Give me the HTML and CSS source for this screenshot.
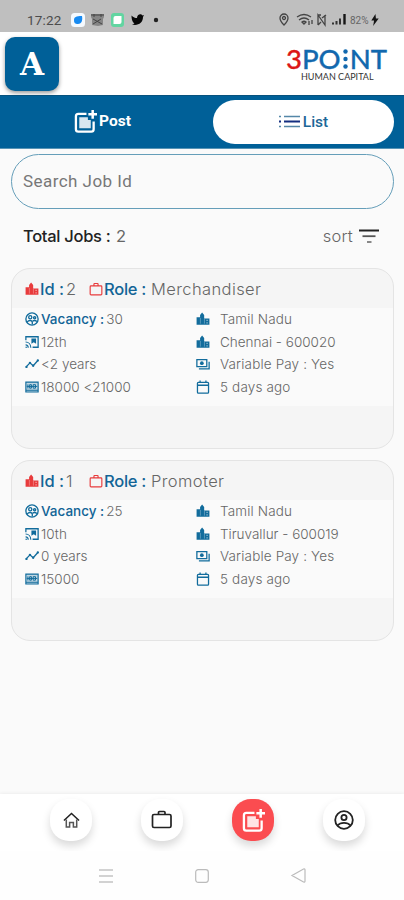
FILE: index.html
```
<!DOCTYPE html>
<html lang="en">
  <head>
    <meta charset="UTF-8" />
    <meta name="viewport" content="width=device-width, initial-scale=1.0" />
    <link rel="stylesheet" href="styles.css">
    <title>Jobs</title>
  </head>
  <body>
    <svg class="sprite">
      <symbol id="post" viewBox="0 0 24 24">
        <path d="M13 4H4.500A2.500 2.500 0 0 0 2 6.500V20a2.500 2.500 0 0 0 2.500 2.500H18a2.500 2.500 0 0 0 2.500-2.500V12" fill="none" stroke="currentColor" stroke-width="2.400" />
        <path d="M5.500 7.500h9v3h3V19h-12z" fill="currentColor" opacity=".85" />
        <path d="M19.500 0v9M15 4.500h9" stroke="currentColor" stroke-width="2.600" />
      </symbol>
      <symbol id="city" viewBox="0 0 24 24">
        <path d="M1 9h6V5l3.500-4L14 5v6h9v11H1z" fill="currentColor" />
        <path d="M7.500 10v10M14.500 12v8" stroke="#fff" stroke-width="1" opacity=".5" />
        <path d="M18 14.500h2M18 18.500h2" stroke="#fff" stroke-width="2" opacity=".6" />
      </symbol>
      <symbol id="bag" viewBox="0 0 24 24">
        <path d="M3.500 6.500h17a1.500 1.500 0 0 1 1.500 1.500v12.500a1.500 1.500 0 0 1-1.500 1.500h-17A1.500 1.500 0 0 1 2 20.500V8a1.500 1.500 0 0 1 1.500-1.500zM8.500 6V3.500a1 1 0 0 1 1-1h5a1 1 0 0 1 1 1V6" fill="none" stroke="currentColor" stroke-width="2" />
      </symbol>
      <symbol id="people" viewBox="0 0 24 24">
        <g fill="none" stroke="currentColor" stroke-width="2.300">
          <circle cx="12" cy="12" r="10.500" />
          <circle cx="9" cy="9" r="2.700" />
          <circle cx="16.500" cy="10" r="1.900" />
          <path d="M3.500 17.500c3-4 8-4 9 0v4M13 15.500c3-1.500 5.500-1 7.500 1" />
        </g>
      </symbol>
      <symbol id="school" viewBox="0 0 24 24">
        <path d="M1.500 9V3h21v18H13" fill="none" stroke="currentColor" stroke-width="2.200" />
        <path d="M11 6h8v9l-4-2.500-4 2.500z" fill="currentColor" />
        <path d="M1 12c5 0 9 4 9 10M1 17c3 0 4.500 2 4.500 5" fill="none" stroke="currentColor" stroke-width="2" />
        <circle cx="2" cy="21" r="1.300" fill="currentColor" />
      </symbol>
      <symbol id="trend" viewBox="0 0 24 24">
        <path d="M2 17l6.500-7 5.500 5 8-9" fill="none" stroke="currentColor" stroke-width="2.200" />
        <g fill="currentColor"><circle cx="2.500" cy="17" r="2" /><circle cx="8.500" cy="10" r="2" /><circle cx="14" cy="15" r="2" /><circle cx="22" cy="6" r="2" /></g>
      </symbol>
      <symbol id="money" viewBox="0 0 24 24">
        <path d="M1.500 3.500h21v17h-21zM1 17.500h22" fill="currentColor" fill-opacity=".25" stroke="currentColor" stroke-width="2" />
        <path d="M5 7.500v7M8 8h3v6H8zM14 8h4v6h-4zM3 11h18" fill="none" stroke="currentColor" stroke-width="1.700" />
      </symbol>
      <symbol id="pay" viewBox="0 0 24 24">
        <path d="M1.500 4.500h17v12h-17zM5 20.500h17.500V8" fill="none" stroke="currentColor" stroke-width="2.200" />
        <circle cx="10" cy="10.500" r="3.200" fill="currentColor" />
      </symbol>
      <symbol id="calendar" viewBox="0 0 24 24">
        <path d="M4 4h16a1.500 1.500 0 0 1 1.500 1.500v15.500a1.500 1.500 0 0 1-1.500 1.500H4a1.500 1.500 0 0 1-1.500-1.500V5.500A1.500 1.500 0 0 1 4 4zM2.500 9h19M7 1v4M17 1v4" fill="none" stroke="currentColor" stroke-width="2.200" />
      </symbol>
    </svg>

    <div class="status">
      <span class="time">17:22</span>
      <svg width="100" height="14" viewBox="0 0 100 14">
        <rect x="0" y="0" width="14" height="14" rx="3.500" fill="#f5faff" />
        <path d="M3 7c0-3 2-4 8-4 1 5-1 8-4 8s-4-1-4-4z" fill="#168af1" />
        <path d="M20 1h13v3l-1 2v6l-5 1-6-1V6l-1-2z" fill="#858585" />
        <path d="M20 2h13M22 6l9 5M22 11l8-5M23 1v3M30 1v3" stroke="#444" fill="none" />
        <rect x="40" y="0" width="13" height="14" rx="3" fill="#62d5a1" />
        <path d="M42.500 5q0-2 2-2h6v6q0 2-2 2h-6z" fill="#fff" />
        <path d="M60.500 2.500c2 2 3.700 2.500 5.500 2.500 0-4 4-5 5.500-2.500l1.500-.5-1 2c0 6-5 9-11 7.500 1.200-.2 2-.7 2.500-1.200-2-.7-3-4-3-7.800z" fill="#080808" />
        <circle cx="85" cy="7" r="2.200" fill="#222" />
      </svg>
      <svg class="status-signal" width="70" height="14" viewBox="0 0 70 14">
        <g fill="none" stroke="#444" stroke-width="1.300">
          <path d="M5 12C2 9 1 7 1 5a4 4 0 0 1 8 0c0 2-1 4-4 7z" />
          <circle cx="5" cy="5" r="1.500" />
          <path d="M18 4q7-5 14 0M20 7q5-4 10 0M23 9q2-1.500 4 0l-2 2zM30 12V8M33 11V7" />
          <path d="M39 12V2l7 10V2M39 2h3M39 12l3-3M43 5l4-3" />
        </g>
        <path d="M54 11.500v-2M57.500 11.500V8M61 11.500V5.500" stroke="#333" stroke-width="2" />
        <path d="M65.500 11.500V1" stroke="#151515" stroke-width="2.400" />
      </svg>
      <span class="battery">82%</span>
      <svg width="8" height="12" viewBox="0 0 8 13"><path d="M4.500 0L0 7h3l-1 6 6-8H5z" fill="#151515" /></svg>
    </div>

    <header class="header">
      <div class="avatar">A</div>
      <div class="logo">
        <div class="logo-name">
          <span class="three">3</span><span>PO</span>
          <svg width="5" height="20" viewBox="0 0 5 20" fill="#1268ae"><circle cx="2.500" cy="2.500" r="2.200" /><circle cx="2.500" cy="10" r="2.200" /><circle cx="2.500" cy="17.500" r="2.200" /></svg>
          <span>NT</span>
        </div>
        <div class="logo-sub">HUMAN CAPITAL</div>
      </div>
    </header>

    <nav class="tabs">
      <a class="tab"><svg width="23" height="23"><use href="#post" /></svg>Post</a>
      <a class="tab active">
        <svg width="21" height="13" viewBox="0 0 21 13">
          <path d="M0 1.500h2M5 1.500h16M0 11.500h2M5 11.500h16" stroke="#5587a8" stroke-width="1.700" />
          <path d="M0 6.500h2M5 6.500h16" stroke="#142e80" stroke-width="2" />
        </svg>List
      </a>
    </nav>

    <main class="content">
      <div class="search">Search Job Id</div>
      <div class="summary">
        <div class="total"><b>Total Jobs :</b> 2</div>
        <div class="sort">sort
          <svg width="20" height="15" viewBox="0 0 20 15"><path d="M0 1.500h20" stroke="#222" stroke-width="2" /><path d="M3.500 7.200h13" stroke="#555" stroke-width="1.800" /><path d="M8 13h4.500" stroke="#888" stroke-width="2" /></svg>
        </div>
      </div>

      <section class="card">
        <div class="card-head">
          <svg><use href="#city" /></svg><b>Id :</b><span class="id">2</span>
          <svg><use href="#bag" /></svg><b class="role-label">Role :</b><span class="role">Merchandiser</span>
        </div>
        <div class="card-body">
          <div class="col">
            <p><svg><use href="#people" /></svg><b>Vacancy :</b><span class="num">30</span></p>
            <p><svg><use href="#school" /></svg>12th</p>
            <p><svg><use href="#trend" /></svg>&lt;2 years</p>
            <p><svg><use href="#money" /></svg>18000 &lt;21000</p>
          </div>
          <div class="col right">
            <p><svg><use href="#city" /></svg>Tamil Nadu</p>
            <p><svg><use href="#city" /></svg><span class="place">Chennai - 600020</span></p>
            <p><svg><use href="#pay" /></svg>Variable Pay : Yes</p>
            <p><svg><use href="#calendar" /></svg>5 days ago</p>
          </div>
        </div>
      </section>

      <section class="card">
        <div class="card-head">
          <svg><use href="#city" /></svg><b>Id :</b><span class="id">1</span>
          <svg><use href="#bag" /></svg><b class="role-label">Role :</b><span class="role">Promoter</span>
        </div>
        <div class="card-body">
          <div class="col">
            <p><svg><use href="#people" /></svg><b>Vacancy :</b><span class="num">25</span></p>
            <p><svg><use href="#school" /></svg>10th</p>
            <p><svg><use href="#trend" /></svg>0 years</p>
            <p><svg><use href="#money" /></svg>15000</p>
          </div>
          <div class="col right">
            <p><svg><use href="#city" /></svg>Tamil Nadu</p>
            <p><svg><use href="#city" /></svg><span class="place">Tiruvallur - 600019</span></p>
            <p><svg><use href="#pay" /></svg>Variable Pay : Yes</p>
            <p><svg><use href="#calendar" /></svg>5 days ago</p>
          </div>
        </div>
      </section>
    </main>

    <nav class="bottom">
      <a class="round"><svg width="17" height="17" viewBox="0 0 18 18" fill="none" stroke="#222" stroke-width="1.600"><path d="M1 9l8-7.500L17 9" /><path d="M3.500 8v8h3.500v-5h4v5h3.500V8" stroke="#555" /></svg></a>
      <a class="round"><svg width="22" height="20" viewBox="0 0 22 20" fill="none" stroke="#222" stroke-width="1.700"><rect x="1.500" y="4.500" width="18.500" height="13" rx="1.500" /><path d="M7.500 4V2.500q0-1 1-1h4.500q1 0 1 1V4" /></svg></a>
      <a class="round selected"><svg width="23" height="23"><use href="#post" /></svg></a>
      <a class="round"><svg width="20" height="20" viewBox="0 0 20 20" fill="none" stroke="#222" stroke-width="1.800"><circle cx="10" cy="10" r="8.800" /><circle cx="10" cy="7.500" r="2.600" /><path d="M3.500 15.500c3-3.500 10-3.500 13 0" /></svg></a>
    </nav>

    <div class="system">
      <svg width="14" height="14" viewBox="0 0 14 14"><path d="M0 1h14M0 7h14M0 13h14" stroke="#c4c4c4" stroke-width="1.400" /></svg>
      <svg width="14" height="14" viewBox="0 0 14 14"><rect x=".7" y=".7" width="12.600" height="12.600" rx="2.500" fill="none" stroke="#bbb" stroke-width="1.200" /></svg>
      <svg width="15" height="15" viewBox="0 0 15 15"><path d="M1 7.500L12.500 1q1.500-.5 1.500 1v11q0 1.500-1.500 1z" fill="none" stroke="#bbb" stroke-width="1.200" /></svg>
    </div>
  </body>
</html>
```
FILE: styles.css
```
* {
  box-sizing: border-box;
}

body {
  margin: 0;
  height: 900px;
  display: flex;
  flex-direction: column;
  overflow: hidden;
  background: #fafafa;
  color: #666;
  font-family: Inter, "Open Sans", sans-serif;
}

svg {
  flex: none;
  overflow: visible;
}

.sprite {
  display: none;
}

.status {
  height: 32px;
  padding: 8px 25px 0 27px;
  display: flex;
  align-items: center;
  background: #bfbfbf;
  font-family: Roboto, sans-serif;
}

.time {
  width: 44px;
  font-size: 13.5px;
  letter-spacing: 0.2px;
  color: #4c4c4c;
}

.status-signal {
  margin-left: auto;
}

.battery {
  width: 21px;
  margin-left: 1px;
  font-size: 10px;
  color: #666;
}

.header {
  height: 63px;
  padding: 5px 17px 0 5px;
  display: flex;
  justify-content: space-between;
  background: #fff;
}

.avatar {
  width: 54px;
  height: 54px;
  border-radius: 10px;
  background: #006098;
  box-shadow: 0 2px 4px rgba(0, 0, 0, 0.4);
  color: #fff;
  font: bold 31px/54px "DejaVu Serif", serif;
  text-align: center;
}

.logo {
  width: 101px;
  padding-top: 7px;
}

.logo-name {
  display: flex;
  align-items: center;
  height: 28px;
  color: #1268ae;
  font: 500 27.5px/27px Lato, sans-serif;
  -webkit-text-stroke: 0.3px;
}

.logo-name svg {
  margin: 1px 2px 0 2px;
}

.three {
  color: #dc1717;
}

.logo-sub {
  margin-left: 15px;
  color: #333;
  font: 9px/10px Lato, sans-serif;
  white-space: nowrap;
}

.tabs {
  height: 54px;
  padding: 5px 10px 5px 11px;
  display: flex;
  background: #006098;
  border-top: 1px solid #07527e;
  border-bottom: 1px solid #5794b5;
}

.tab {
  flex: 1;
  display: flex;
  align-items: center;
  justify-content: center;
  gap: 2px;
  padding: 0 19px 2px 0;
  color: #fff;
  font: 700 15.5px Roboto, sans-serif;
}

.tab.active {
  flex: none;
  width: 181px;
  margin: -1px 0;
  padding: 0 0 1px;
  gap: 3px;
  border-radius: 24px;
  background: #fff;
  color: #1c6797;
  font-weight: 500;
}

.content {
  flex: 1;
  padding: 5px 10px 0 11px;
}

.search {
  height: 55px;
  padding-left: 11px;
  border: 1px solid #659eb9;
  border-radius: 28px;
  color: #777;
  font: 17px/52px Roboto, sans-serif;
  letter-spacing: 0.45px;
}

.summary {
  height: 59px;
  padding: 0 15px 5px 12px;
  display: flex;
  align-items: center;
  justify-content: space-between;
  font-size: 16.5px;
}

.total b {
  margin-right: 1px;
  color: #222;
  font-weight: 500;
  letter-spacing: -0.3px;
}

.sort {
  display: flex;
  align-items: center;
  gap: 6px;
  color: #666;
  font-weight: 300;
  letter-spacing: 0.2px;
}

.card {
  height: 181px;
  margin-bottom: 11px;
  border: 1px solid #e4e4e4;
  border-radius: 19px;
  background: #f5f5f5;
  overflow: hidden;
}

.card-head {
  height: 39px;
  padding: 0 0 0 13px;
  display: flex;
  align-items: center;
  font-size: 16.5px;
}

.card b {
  color: #126496;
  font-weight: 500;
}

.card-head svg {
  width: 14px;
  height: 14px;
  margin-right: 1px;
  color: #e83b3c;
}

.id {
  width: 23px;
  margin-left: 2px;
  font-weight: 300;
}

.role-label {
  letter-spacing: -0.3px;
}

.role {
  margin-left: 5px;
  font-weight: 300;
  letter-spacing: 0.4px;
}

.card-body {
  height: 98px;
  display: flex;
  background: #fafafa;
  font-size: 13.5px;
  font-weight: 300;
}

.col {
  width: 171px;
  padding-left: 13px;
}

.col p {
  height: 22.5px;
  margin: 0;
  display: flex;
  align-items: center;
  white-space: nowrap;
}

.col svg {
  width: 14px;
  height: 14px;
  margin-right: 2px;
  color: #126c9c;
}

.num {
  margin-left: 2px;
}

.col.right {
  width: auto;
  letter-spacing: 0.15px;
}

.right svg {
  margin-right: 10px;
}

.place {
  letter-spacing: 0;
}

.bottom {
  height: 57px;
  padding: 5px 39px 0 50px;
  display: flex;
  justify-content: space-between;
  align-items: flex-start;
  background: #fff;
  box-shadow: 0 -1px 3px rgba(0, 0, 0, 0.05);
}

.round {
  width: 42px;
  height: 42px;
  display: flex;
  align-items: center;
  justify-content: center;
  border-radius: 19px;
  background: #fff;
  box-shadow: 0 5px 8px rgba(0, 0, 0, 0.15);
  color: #222;
}

.round.selected {
  background: #fb4c50;
  color: #fff;
}

.system {
  height: 49px;
  padding: 0 98px 0 99px;
  display: flex;
  align-items: center;
  justify-content: space-between;
  background: #fefefe;
}
```
